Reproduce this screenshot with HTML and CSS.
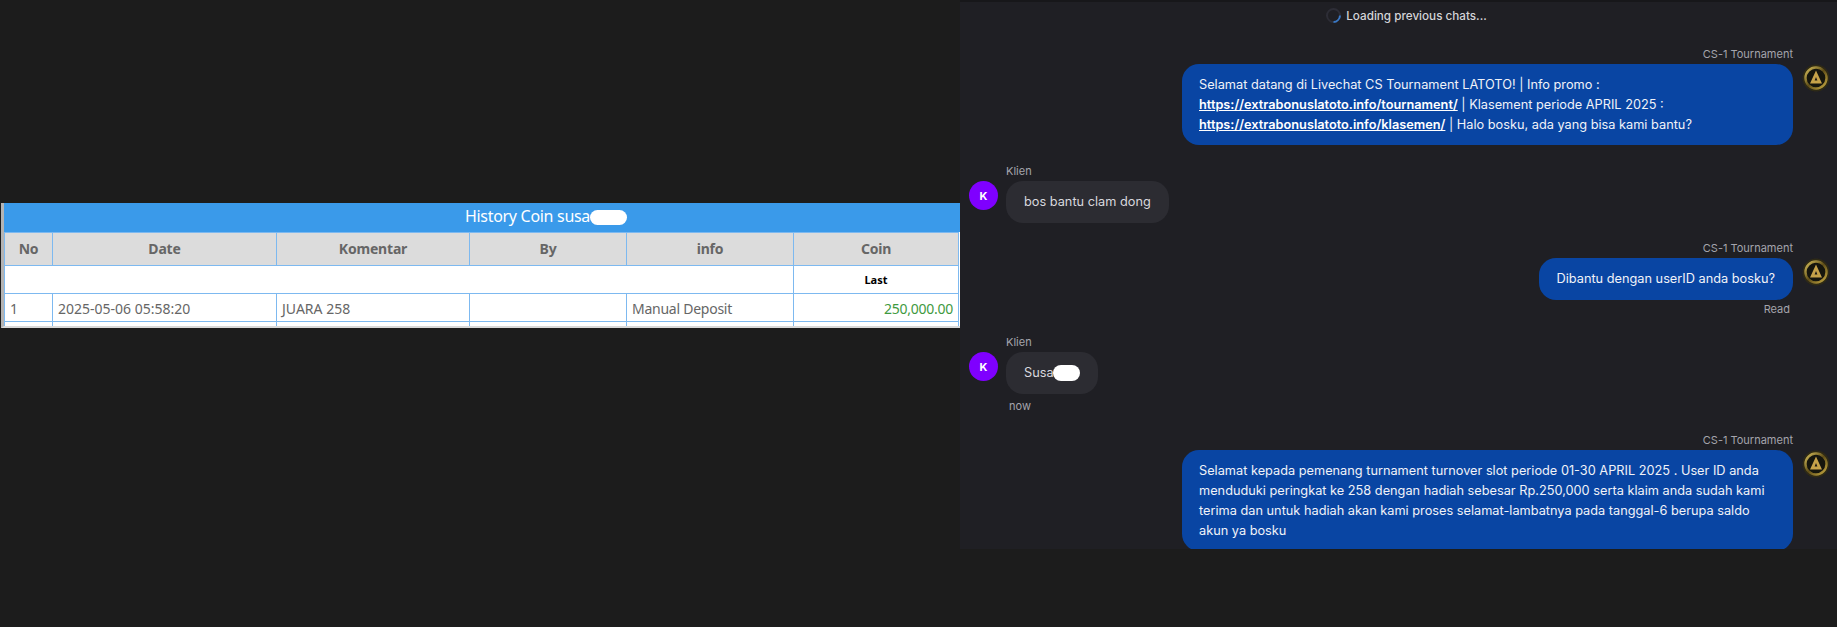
FILE: index.html
```html
<!DOCTYPE html>
<html lang="en">
<head>
  <meta charset="UTF-8" />
  <title>History Coin and Livechat</title>
  <link rel="stylesheet" href="styles.css">
</head>
<body>
  <svg class="defs" width="0" height="0">
    <defs>
      <linearGradient id="goldRing" x1="0" y1="0" x2="1" y2="1">
        <stop offset="0" stop-color="#d8c05c"/>
        <stop offset="0.5" stop-color="#5f4e18"/>
        <stop offset="1" stop-color="#c9ab44"/>
      </linearGradient>
      <filter id="soft" x="-10%" y="-10%" width="120%" height="120%">
        <feGaussianBlur stdDeviation="0.6"/>
      </filter>
      <symbol id="agentLogo" viewBox="0 0 28 28">
        <g filter="url(#soft)">
          <circle cx="14" cy="14" r="13.5" fill="#2f2a14"/>
          <circle cx="14" cy="14" r="10.5" fill="#12120f" stroke="url(#goldRing)" stroke-width="2.4"/>
          <path d="M14 6.5 L20 19.5 H8 Z" fill="#c6a24a"/>
          <path d="M14 13 L15.4 16.5 H12.6 Z" fill="#1b1a14"/>
        </g>
      </symbol>
    </defs>
  </svg>

  <div class="page">
    <section class="left">
      <div class="history">
        <div class="history-title">History Coin susa<span class="blob blob-title"></span></div>
        <table class="coin-table">
          <colgroup>
            <col class="c-no"><col class="c-date"><col class="c-komentar"><col class="c-by"><col class="c-info"><col class="c-coin">
          </colgroup>
          <thead>
            <tr><th>No</th><th>Date</th><th>Komentar</th><th>By</th><th>info</th><th>Coin</th></tr>
          </thead>
          <tbody>
            <tr class="row-last"><td colspan="5"></td><td class="last">Last</td></tr>
            <tr><td>1</td><td>2025-05-06 05:58:20</td><td>JUARA 258</td><td></td><td class="narrow">Manual Deposit</td><td class="amount narrow">250,000.00</td></tr>
            <tr class="row-stub"><td></td><td></td><td></td><td></td><td></td><td></td></tr>
          </tbody>
        </table>
      </div>
    </section>

    <section class="chat">
      <div class="loading">
        <span class="spinner"></span>
        <span>Loading previous chats...</span>
      </div>

      <div class="msg agent first">
        <div class="msg-body">
          <div class="name">CS-1 Tournament</div>
          <div class="bubble wide">
            Selamat datang di Livechat CS Tournament LATOTO! | Info promo :<br>
            <a href="#">https://extrabonuslatoto.info/tournament/</a> | Klasement periode APRIL 2025 :<br>
            <a href="#">https://extrabonuslatoto.info/klasemen/</a> | Halo bosku, ada yang bisa kami bantu?
          </div>
        </div>
        <svg class="agent-logo"><use href="#agentLogo"/></svg>
      </div>

      <div class="msg client msg-klien-1">
        <div class="client-avatar">K</div>
        <div class="msg-body">
          <div class="name">Klien</div>
          <div class="bubble">bos bantu clam dong</div>
        </div>
      </div>

      <div class="msg agent msg-agent-2">
        <div class="msg-body">
          <div class="name">CS-1 Tournament</div>
          <div class="bubble">Dibantu dengan userID anda bosku?</div>
          <div class="status">Read</div>
        </div>
        <svg class="agent-logo"><use href="#agentLogo"/></svg>
      </div>

      <div class="msg client msg-klien-2">
        <div class="client-avatar">K</div>
        <div class="msg-body">
          <div class="name">Klien</div>
          <div class="bubble">Susa<span class="blob blob-chat"></span></div>
          <div class="status status-now">now</div>
        </div>
      </div>

      <div class="msg agent msg-agent-3">
        <div class="msg-body">
          <div class="name">CS-1 Tournament</div>
          <div class="bubble wide">
            Selamat kepada pemenang turnament turnover slot periode 01-30 APRIL 2025 . User ID anda<br>
            menduduki peringkat ke 258 dengan hadiah sebesar Rp.250,000 serta klaim anda sudah kami<br>
            terima dan untuk hadiah akan kami proses selamat-lambatnya pada tanggal-6 berupa saldo<br>
            akun ya bosku
          </div>
        </div>
        <svg class="agent-logo"><use href="#agentLogo"/></svg>
      </div>
    </section>
  </div>
</body>
</html>
```

FILE: styles.css
```css
body {
  margin: 0;
  background: #1c1c1c;
  font-family: "Noto Sans", Arial, sans-serif;
}
.defs {
  display: block;
  height: 0;
}
.page {
  display: flex;
  align-items: flex-start;
  height: 627px;
  overflow: hidden;
}
.left {
  width: 960px;
  flex: none;
  padding-top: 203px;
}
.history {
  margin-left: 1px;
  width: 959px;
  box-sizing: border-box;
  height: 125px;
  overflow: hidden;
  border-left: 3px solid #b4b4b4;
  border-bottom: 2px solid #d8d8d8;
  background: white;
}
.history-title {
  height: 29px;
  line-height: 26px;
  padding-left: 128px;
  background: #3a9aea;
  color: white;
  font-size: 16px;
  letter-spacing: -0.3px;
  text-align: center;
}
.blob {
  display: inline-block;
  background: white;
  border-radius: 8px;
  vertical-align: middle;
}
.blob-title {
  width: 37px;
  height: 15px;
  margin-top: -1px;
}
.coin-table {
  width: 955px;
  table-layout: fixed;
  border-collapse: collapse;
  font-size: 14px;
  color: #666;
}
.c-no { width: 48px; }
.c-date { width: 224px; }
.c-komentar { width: 193px; }
.c-by { width: 157px; }
.c-info { width: 167px; }
.coin-table th,
.coin-table td {
  border: 1px solid #7db9f0;
  padding: 0 5px;
}
.coin-table th {
  height: 30px;
  padding-bottom: 2px;
  background: #dcdcdc;
  font-weight: 700;
  color: #666;
  letter-spacing: -0.2px;
  text-align: center;
}
.coin-table td {
  height: 26px;
  padding-top: 1px;
}
.coin-table .narrow {
  letter-spacing: -0.25px;
}
.coin-table .last {
  height: 27px;
  padding-top: 0;
  font-size: 11px;
  font-weight: 700;
  color: black;
  text-align: center;
}
.coin-table .amount {
  color: #3f9a3f;
  text-align: right;
}
.coin-table .row-stub td {
  height: 6px;
  padding: 0;
}

.chat {
  flex: 1;
  box-sizing: border-box;
  height: 549px;
  overflow: hidden;
  background: #1f1f24;
  border-top: 2px solid #17171a;
  font-family: Inter, "Noto Sans", sans-serif;
  font-size: 12.75px;
  padding: 0 0 0 9px;
}
.loading {
  display: flex;
  align-items: center;
  justify-content: center;
  gap: 5px;
  height: 27px;
  padding-left: 7px;
  font-size: 11.7px;
  font-weight: 500;
  color: #d4d4d8;
}
.spinner {
  width: 11px;
  height: 11px;
  border: 2px solid #2d2d36;
  border-right-color: #3a78c4;
  border-radius: 50%;
  transform: rotate(45deg);
}
.msg {
  display: flex;
  gap: 9px;
}
.msg.agent {
  justify-content: flex-end;
  padding-right: 8px;
}
.msg.first { margin-top: 18px; }
.msg-klien-1 { margin-top: 19px; }
.msg-agent-2 { margin-top: 18px; }
.msg-klien-2 { margin-top: 19px; }
.msg-agent-3 { margin-top: 20px; }
.msg-body {
  display: flex;
  flex-direction: column;
}
.agent .msg-body { align-items: flex-end; }
.client .msg-body { align-items: flex-start; }
.name {
  font-size: 11px;
  line-height: 14px;
  margin-bottom: 3px;
  color: #a4a4ac;
}
.bubble {
  border-radius: 17px;
  padding: 11px 18px;
  line-height: 20px;
  color: #d8d8de;
  background: #2c2c32;
}
.agent .bubble {
  background: #0945a3;
  color: #f0f2f8;
}
.bubble.wide {
  width: 611px;
  box-sizing: border-box;
  padding: 11px 18px 10px 17px;
}
.bubble a {
  color: white;
  font-weight: 600;
  text-decoration: underline;
}
.blob-chat {
  width: 27px;
  height: 16px;
  margin-left: -1px;
  vertical-align: top;
  margin-top: 2px;
}
.status {
  font-size: 11px;
  line-height: 14px;
  margin: 2px 3px 0 0;
  color: #a4a4ac;
}
.status-now {
  margin: 5px 0 0 3px;
}
.agent-logo {
  width: 28px;
  height: 28px;
  flex: none;
  margin-top: 17px;
  margin-right: -1px;
}
.client-avatar {
  width: 29px;
  height: 29px;
  flex: none;
  margin-top: 17px;
  border-radius: 50%;
  background: #7f00ff;
  color: white;
  font-size: 11px;
  font-weight: 700;
  display: flex;
  align-items: center;
  justify-content: center;
}
.client {
  gap: 8px;
}
```
